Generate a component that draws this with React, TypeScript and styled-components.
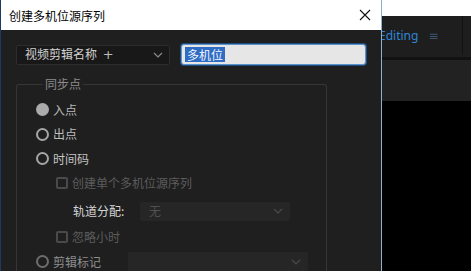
import styled, { createGlobalStyle } from 'styled-components';

const GlobalStyle = createGlobalStyle`
	html, body {
		margin: 0;
		padding: 0;
		background: #000;
	}
	body {
		font-family: "Noto Sans CJK SC", "Noto Sans", sans-serif;
	}
`;

const Chevron = ({ color = '#8a8a8a' }: { color?: string }) => (
	<svg width="10" height="6" viewBox="0 0 10 6">
		<path d="M1 1 L5 5 L9 1" fill="none" stroke={color} strokeWidth="1.2" />
	</svg>
);

const App = () => {
	return (
		<Screen>
			<GlobalStyle />
			<Dialog>
				<TitleBar>
					<Title>创建多机位源序列</Title>
					<CloseButton aria-label="close">
						<svg width="12" height="12" viewBox="0 0 12 12">
							<path d="M1 1 L11 11 M11 1 L1 11" stroke="#111" strokeWidth="1.1" />
						</svg>
					</CloseButton>
				</TitleBar>

				<Body>
					<TopRow>
						<Select $width={154} $height={20}>
							<SelectText>视频剪辑名称 <Plus>+</Plus></SelectText>
							<Chevron />
						</Select>
						<NameInput>
							<Selected>多机位</Selected>
						</NameInput>
					</TopRow>

					<Group>
						<Legend>同步点</Legend>
						<Rows>
							<Row>
								<Radio $checked />
								<RowLabel $tone="#b8b8b8">入点</RowLabel>
							</Row>
							<Row>
								<Radio />
								<RowLabel $tone="#bdbdbd">出点</RowLabel>
							</Row>
							<Row>
								<Radio />
								<RowLabel $tone="#c4c4c4">时间码</RowLabel>
							</Row>
							<Row $indent={20}>
								<Checkbox />
								<RowLabel $tone="#5c5c5c">创建单个多机位源序列</RowLabel>
							</Row>
							<Row $indent={37} $tall>
								<FieldLabel>轨道分配:</FieldLabel>
								<Select $width={150} $height={19} $disabled>
									<SelectText $muted>无</SelectText>
									<Chevron color="#4a4a4a" />
								</Select>
							</Row>
							<Row $indent={20}>
								<Checkbox />
								<RowLabel $tone="#5c5c5c">忽略小时</RowLabel>
							</Row>
							<Row>
								<Radio $dim />
								<RowLabel $tone="#8e8e8e">剪辑标记</RowLabel>
								<Select $width={180} $height={20} $disabled $offset={27}>
									<SelectText $muted />
									<Chevron color="#4a4a4a" />
								</Select>
							</Row>
						</Rows>
					</Group>
				</Body>
			</Dialog>

			<Backdrop>
				<BackdropTop />
				<Header>
					<TabArea>
						<TabText>Editing</TabText>
						<Menu>≡</Menu>
					</TabArea>
					<HeaderEnd />
				</Header>
				<HeaderShadow />
				<Panel />
				<Viewer />
			</Backdrop>
		</Screen>
	);
};

const Screen = styled.div`
	display: flex;
	width: 471px;
	height: 271px;
	overflow: hidden;
`;

const Dialog = styled.div`
	display: flex;
	flex-direction: column;
	width: 380px;
	flex-shrink: 0;
	overflow: hidden;
	background: #1f1f1f;
	border-left: 1px solid #1d3b5c;
	border-right: 1px solid #8fb1cf;
	box-sizing: content-box;
`;

const TitleBar = styled.div`
	display: flex;
	align-items: center;
	justify-content: space-between;
	flex-shrink: 0;
	height: 30px;
	padding: 0 9px 0 8px;
	background: #ffffff;
`;

const Title = styled.span`
	font-size: 12px;
	color: #000;
	line-height: 1;
	padding-top: 1px;
`;

const CloseButton = styled.button`
	display: flex;
	align-items: center;
	justify-content: center;
	width: 14px;
	height: 14px;
	padding: 0;
	margin-top: -1px;
	border: none;
	background: none;
`;

const Body = styled.div`
	display: flex;
	flex-direction: column;
	flex-shrink: 0;
	padding: 14px 0 0 15px;
`;

const TopRow = styled.div`
	display: flex;
	align-items: center;
	gap: 11px;
`;

const Select = styled.div<{ $width: number; $height: number; $disabled?: boolean; $offset?: number }>`
	display: flex;
	align-items: center;
	justify-content: space-between;
	flex-shrink: 0;
	box-sizing: border-box;
	width: ${({ $width }) => $width}px;
	height: ${({ $height }) => $height}px;
	margin-left: ${({ $offset }) => $offset ?? 0}px;
	padding: 0 6px 0 8px;
	background: ${({ $disabled }) => ($disabled ? '#262626' : '#181818')};
	border: 1px solid ${({ $disabled }) => ($disabled ? '#262626' : '#2d2d2d')};
	border-radius: 2px;
`;

const SelectText = styled.span<{ $muted?: boolean }>`
	font-size: 12px;
	line-height: 1;
	color: ${({ $muted }) => ($muted ? '#505050' : '#d2d2d2')};
	white-space: nowrap;
`;

const Plus = styled.span`
	margin-left: 3px;
	color: #bdbdbd;
	font-family: "DejaVu Sans", sans-serif;
	font-size: 13px;
`;

const NameInput = styled.div`
	display: flex;
	align-items: center;
	box-sizing: border-box;
	width: 185px;
	height: 21px;
	padding: 0 3px;
	background: #e6e6e6;
	border: 1px solid #5a93cc;
	border-radius: 3px;
	box-shadow: 0 0 0 1px #1f4c7a;
`;

const Selected = styled.span`
	font-size: 12px;
	line-height: 15px;
	padding: 0 2px;
	color: #f2f6ff;
	background: #2f6cc4;
`;

const Group = styled.fieldset`
	width: 311px;
	box-sizing: border-box;
	margin: 11px 0 0 0;
	padding: 0 0 0 19px;
	border: 1px solid #363636;
	border-bottom: none;
	border-radius: 3px 3px 0 0;
	min-height: 220px;
`;

const Legend = styled.legend`
	margin-left: 7px;
	padding: 0 2px;
	font-size: 12px;
	line-height: 16px;
	color: #8c8c8c;
`;

const Rows = styled.div`
	display: flex;
	flex-direction: column;
	padding-top: 5.5px;
`;

const Row = styled.div<{ $indent?: number; $tall?: boolean }>`
	display: flex;
	align-items: center;
	flex-shrink: 0;
	box-sizing: border-box;
	height: ${({ $tall }) => ($tall ? 29.5 : 24.5)}px;
	padding-top: ${({ $tall }) => ($tall ? 2 : 0)}px;
	padding-left: ${({ $indent }) => $indent ?? 0}px;
`;

const Radio = styled.span<{ $checked?: boolean; $dim?: boolean }>`
	box-sizing: border-box;
	width: 13px;
	height: 13px;
	border-radius: 50%;
	flex-shrink: 0;
	border: ${({ $checked, $dim }) => ($checked ? 'none' : `2px solid ${$dim ? '#6e6e6e' : '#a6a6a6'}`)};
	background: ${({ $checked }) => ($checked ? '#ababab' : 'transparent')};
`;

const Checkbox = styled.span`
	box-sizing: border-box;
	width: 12px;
	height: 12px;
	flex-shrink: 0;
	border: 2px solid #4a4a4a;
	border-radius: 2px;
`;

const RowLabel = styled.span<{ $tone: string }>`
	margin-left: 4px;
	font-size: 12px;
	line-height: 1;
	color: ${({ $tone }) => $tone};
	white-space: nowrap;
`;

const FieldLabel = styled.span`
	width: 67px;
	font-size: 12px;
	line-height: 1;
	color: #d4d4d4;
	white-space: nowrap;
`;

const Backdrop = styled.div`
	display: flex;
	flex-direction: column;
	flex: 1;
	min-width: 0;
`;

const BackdropTop = styled.div`
	flex-shrink: 0;
	height: 16px;
	background: #ffffff;
`;

const Header = styled.div`
	display: flex;
	flex-shrink: 0;
	height: 41px;
	background: #1e1e1e;
`;

const TabArea = styled.div`
	display: flex;
	align-items: center;
	flex: 1;
	overflow: hidden;
	padding-bottom: 2px;
`;

const TabText = styled.span`
	margin-left: -3px;
	font-family: "Noto Sans", sans-serif;
	font-size: 12px;
	color: #2f86d8;
	white-space: nowrap;
`;

const Menu = styled.span`
	margin-left: 10px;
	font-family: "DejaVu Sans", sans-serif;
	font-size: 12px;
	color: #3d5670;
`;

const HeaderEnd = styled.div`
	width: 8px;
	border-left: 1px solid #121212;
	margin-bottom: 2px;
`;

const HeaderShadow = styled.div`
	flex-shrink: 0;
	height: 3px;
	background: #121212;
`;

const Panel = styled.div`
	flex-shrink: 0;
	height: 41px;
	background: #222222;
`;

const Viewer = styled.div`
	flex: 1;
	background: #000000;
`;

export default App;
